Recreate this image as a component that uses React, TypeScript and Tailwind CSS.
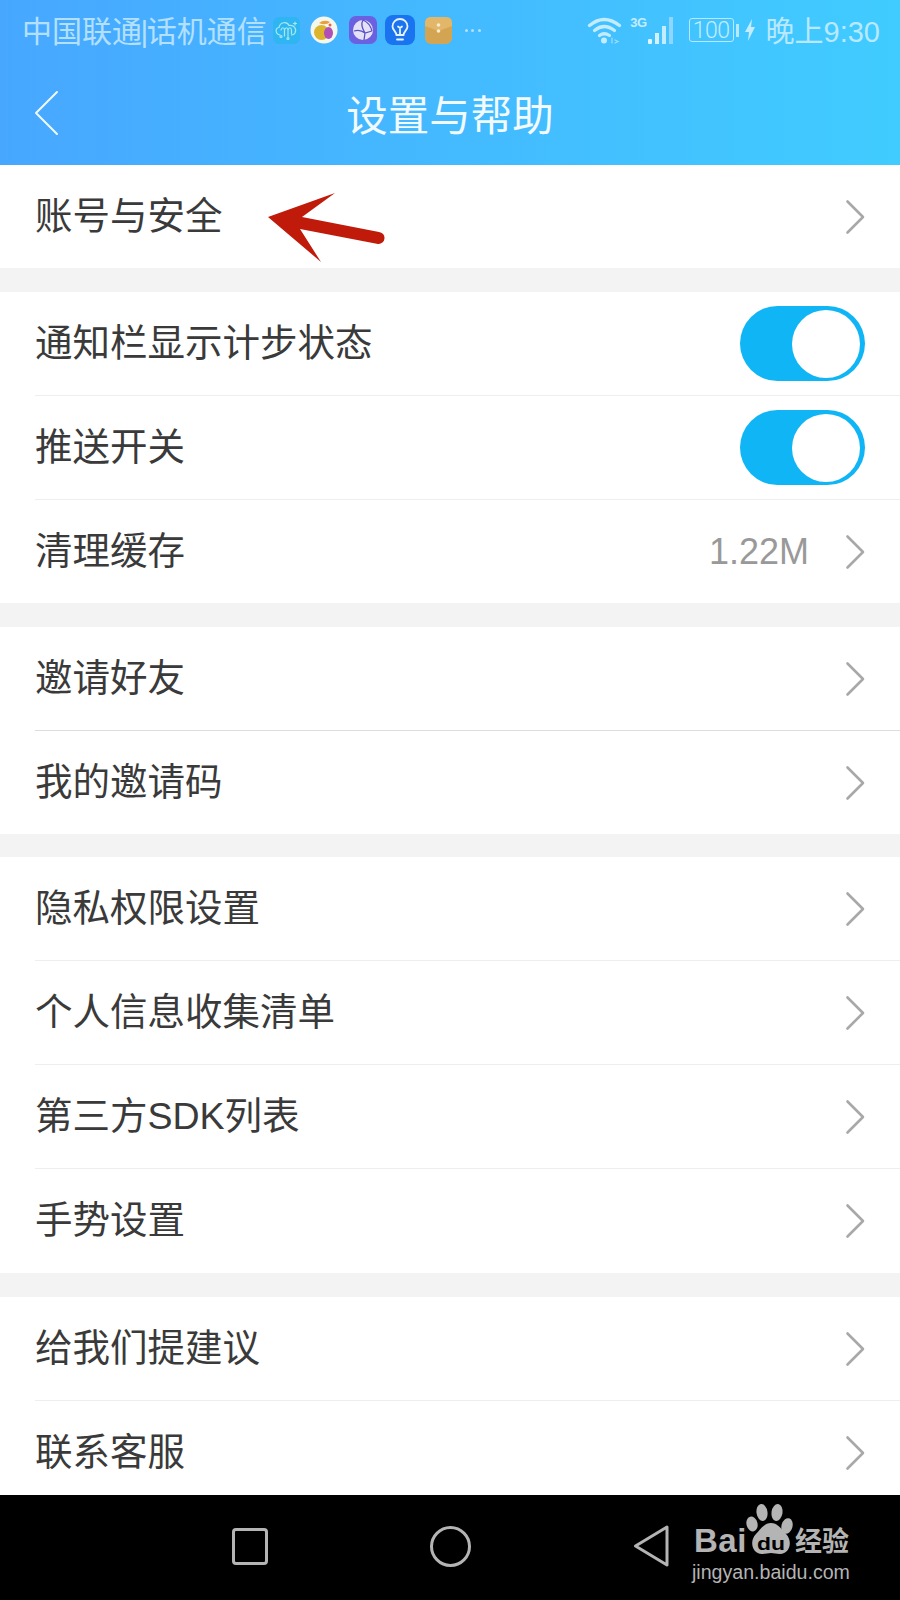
import { ReactNode } from "react"

const FONT = "font-['Liberation_Sans','Noto_Sans_CJK_SC',sans-serif]"

function Chevron() {
  return (
    <svg width="20" height="36" viewBox="0 0 20 36" className="ml-[36px]">
      <path d="M2.5 2.5 L18 18 L2.5 33.5" fill="none" stroke="#a8a8a8" strokeWidth="2.6" strokeLinecap="round" strokeLinejoin="round" />
    </svg>
  )
}

function Toggle() {
  return (
    <div className="flex h-[75px] w-[125px] items-center justify-end rounded-full bg-[#10b5f5] pr-[5px]">
      <div className="h-[68px] w-[68px] rounded-full bg-white" />
    </div>
  )
}

type RowProps = {
  label: string
  children?: ReactNode
  height?: string
  divider?: string
}

function Row({ label, children, height = "h-[104px]", divider }: RowProps) {
  return (
    <div className={`${height} shrink-0 overflow-hidden bg-white pl-[35px]`}>
      <div className={`flex h-[104px] items-center justify-between pr-[35px] ${divider ?? ""}`}>
        <span className="text-[37.5px] leading-none text-[#3a3a3a]">{label}</span>
        <div className="flex items-center">{children ?? <Chevron />}</div>
      </div>
    </div>
  )
}

function StatusIcons() {
  return (
    <div className="flex items-center">
      {/* cloud */}
      <div className="ml-[6px] flex h-[27px] w-[27px] items-center justify-center rounded-[6px] bg-[#2fb6f2]">
        <svg width="25" height="23" viewBox="0 0 25 23" fill="none" stroke="#a5e8ee" strokeWidth="1.2" strokeLinecap="round">
          <path d="M6 16 C1 15 1 9 5 8.5 C6 3 13 2 15 6.5 C20 5.5 23 10 21 14 C20 16 19 16 17.5 16" />
          <path d="M7 11 C8 8 10 8 10.5 11 V17 M10.5 11 C11.5 8 13.5 8 14 11 V18 M14 11 C15 8 17 8 17.5 11 V15" />
          <circle cx="7" cy="17.5" r="1" />
          <circle cx="14" cy="19.5" r="1" />
          <path d="M21 3 V6 M19.5 4.5 H22.5" />
        </svg>
      </div>
      {/* fruit */}
      <svg width="28" height="28" viewBox="0 0 28 28" className="ml-[10px]">
        <circle cx="14" cy="14" r="13.5" fill="#f4f7ee" />
        <circle cx="11.5" cy="16.5" r="7.5" fill="#dcb52e" />
        <ellipse cx="18.5" cy="17" rx="4.5" ry="6" fill="#b04fb8" />
        <path d="M9 7 Q14 3 20 6 Q16 10 9 7" fill="#e9a03a" />
        <circle cx="20" cy="9" r="1.5" fill="#e2653c" />
      </svg>
      {/* globe */}
      <div className="ml-[11px] flex h-[28px] w-[28px] items-center justify-center rounded-[7px] bg-[#6a60e0]">
        <svg width="22" height="22" viewBox="0 0 22 22">
          <circle cx="11" cy="11" r="10" fill="#e6e2f6" />
          <path d="M2 12 Q8 10 13 14 L20 12 M11 1 Q8 6 13 14 L12 21 M11 1 Q18 4 20 12" stroke="#5a50c8" strokeWidth="1.3" fill="none" />
        </svg>
      </div>
      {/* bulb */}
      <div className="ml-[8px] flex h-[30px] w-[30px] items-center justify-center rounded-[8px] bg-[#1a74f0]">
        <svg width="20" height="24" viewBox="0 0 20 24" fill="none" stroke="#e6f2ff" strokeWidth="1.8" strokeLinecap="round">
          <path d="M6.5 17 C6 13 2.5 12 2.5 8.5 A7.5 7.5 0 0 1 17.5 8.5 C17.5 12 14 13 13.5 17 Z" />
          <path d="M7 21.5 H13 M10 16 V10 M8 8.5 L10 10 L12 8.5" />
        </svg>
      </div>
      {/* envelope */}
      <svg width="27" height="27" viewBox="0 0 27 27" className="ml-[10px]">
        <rect width="27" height="27" rx="6" fill="#d3a552" />
        <path d="M0 6 Q0 0 6 0 H21 Q27 0 27 6 V9 L13.5 14 L0 9 Z" fill="#e3b76a" />
        <circle cx="13.5" cy="8" r="1.8" fill="#f7ecd2" />
        <circle cx="13.5" cy="14" r="1.8" fill="#f7ecd2" />
      </svg>
      <span className="ml-[13px] flex gap-[3.5px]">
        <i className="h-[3px] w-[3px] rounded-full bg-[#b3e0ff]" />
        <i className="h-[3px] w-[3px] rounded-full bg-[#b3e0ff]" />
        <i className="h-[3px] w-[3px] rounded-full bg-[#b3e0ff]" />
      </span>
    </div>
  )
}

function StatusRight() {
  return (
    <div className="flex items-center">
      <svg width="36" height="28" viewBox="0 0 36 28" fill="none" stroke="#c4ecff" strokeWidth="3.2" strokeLinecap="round">
        <path d="M2.5 9.5 Q17 -2.5 32.5 9.5" />
        <path d="M7.5 14.5 Q17 6.5 27.5 14.5" />
        <path d="M12.5 19.5 Q17 16 22.5 19.5" />
        <circle cx="17" cy="24.5" r="3" fill="#c4ecff" stroke="none" />
        <path d="M25 22 L25 27 M28 24 L31 25.5 L28 27" strokeWidth="1.2" opacity="0.7" />
      </svg>
      <div className="ml-[7px] flex h-[30px] items-start">
        <span className="text-[13px] font-bold leading-[15px] tracking-[-0.5px] text-[#c4ecff]">3G</span>
        <svg width="30" height="30" viewBox="0 0 30 30">
          <rect x="1" y="24" width="4" height="5" rx="1" fill="#e0f5ff" />
          <rect x="8" y="18" width="4" height="11" fill="#d5f1ff" />
          <rect x="15" y="11" width="4" height="18" fill="#c4ecff" />
          <rect x="22" y="2" width="4" height="27" fill="#8fd6ff" />
        </svg>
      </div>
      <div className="ml-[12px] flex h-[24px] w-[45px] items-center justify-center rounded-[3px] border-[1.5px] border-[#b9e8ff] font-['Roboto',sans-serif] text-[23px] font-light leading-none tracking-[-0.5px] text-[#c4ecff]">
        100
      </div>
      <div className="ml-[2px] h-[13px] w-[3px] bg-[#b9e8ff]" />
      <svg width="10" height="22" viewBox="0 0 10 22" className="ml-[6px]">
        <path d="M7 0 L0 13 H4 L3 22 L10 8 H6 Z" fill="#c4ecff" />
      </svg>
      <span className="ml-[11px] mt-[4px] text-[29px] leading-none text-[#b9e8ff]">晚上9:30</span>
    </div>
  )
}

function BaiduMark() {
  return (
    <div className="absolute left-[690px] top-[1502px] w-[164px] text-[#b4b4b4]">
      <div className="relative h-[54px]">
        <span className="absolute left-[4px] top-[19px] text-[33px] font-bold leading-[40px] tracking-[0.5px]">Bai</span>
        <svg width="52" height="52" viewBox="0 0 52 52" className="absolute left-[55px] top-[1px]">
          <ellipse cx="7" cy="21" rx="5.5" ry="7.5" transform="rotate(-15 7 21)" fill="#b4b4b4" />
          <ellipse cx="17" cy="9.5" rx="5.5" ry="8.5" transform="rotate(-8 17 9.5)" fill="#b4b4b4" />
          <ellipse cx="32" cy="9.5" rx="5.5" ry="8.5" transform="rotate(8 32 9.5)" fill="#b4b4b4" />
          <ellipse cx="42" cy="23" rx="5.5" ry="8" transform="rotate(15 42 23)" fill="#b4b4b4" />
          <path d="M26 20 C19 20 15 27 11 31 C4 38 7 51 17 51 C21 51 23 50 26 50 C29 50 31 51 35 51 C45 51 48 38 41 31 C37 27 33 20 26 20 Z" fill="#b4b4b4" />
          <text x="12" y="47" fontSize="18" fontWeight="700" textLength="28" lengthAdjust="spacingAndGlyphs" fontFamily="Liberation Sans" fill="#000">du</text>
        </svg>
        <span className="absolute left-[105px] top-[25px] text-[27px] font-bold leading-[30px]">经验</span>
      </div>
      <div className="ml-[2px] mt-[6px] text-[19.6px] leading-[20px]">jingyan.baidu.com</div>
    </div>
  )
}

export default function App() {
  const line = "border-b border-[#eeeeee]"

  return (
    <div className={`relative flex h-[1600px] w-[900px] flex-col overflow-hidden bg-[#f3f3f3] ${FONT}`}>
      {/* header */}
      <div className="h-[165px] shrink-0 bg-gradient-to-r from-[#47a7ff] to-[#40ccff]">
        <div className="flex h-[60px] items-center justify-between pl-[22px] pr-[20px]">
          <div className="flex items-center">
            <span className="mt-[4px] text-[30px] leading-none text-[#b3e0ff]">
              中国联通<span className="mx-[-1.5px]">|</span>话机通信
            </span>
            <StatusIcons />
          </div>
          <StatusRight />
        </div>
        <div className="relative flex h-[105px] items-center justify-center pt-[8px]">
          <svg width="26" height="46" viewBox="0 0 26 46" className="absolute left-[33px] top-[30px]">
            <path d="M24 2 L3 23 L24 44" fill="none" stroke="#eef8ff" strokeWidth="2" strokeLinecap="round" strokeLinejoin="round" />
          </svg>
          <span className="text-[41.5px] leading-none text-[#f2faff]">设置与帮助</span>
        </div>
      </div>

      <Row label="账号与安全" height="h-[103px]" />

      <div className="mt-[24px] flex flex-col">
        <Row label="通知栏显示计步状态" divider={line}><Toggle /></Row>
        <Row label="推送开关" divider={line}><Toggle /></Row>
        <Row label="清理缓存" height="h-[103px]">
          <span className="text-[36px] leading-none text-[#999999]">1.22M</span>
          <Chevron />
        </Row>
      </div>

      <div className="mt-[24px] flex flex-col">
        <Row label="邀请好友" divider="border-b border-[#dddddd]" />
        <Row label="我的邀请码" height="h-[103px]" />
      </div>

      <div className="mt-[23px] flex flex-col">
        <Row label="隐私权限设置" divider={line} />
        <Row label="个人信息收集清单" divider={line} />
        <Row label="第三方SDK列表" divider={line} />
        <Row label="手势设置" />
      </div>

      <div className="mt-[24px] flex flex-col">
        <Row label="给我们提建议" divider={line} />
        <Row label="联系客服" height="h-[94px]" />
      </div>

      {/* android nav bar */}
      <div className="flex h-[105px] shrink-0 items-center bg-black pb-[3px]">
        <div className="ml-[232px] h-[37px] w-[36px] rounded-[4px] border-[3px] border-[#b4b4b4]" />
        <div className="ml-[162px] h-[41px] w-[41px] rounded-full border-[3px] border-[#b4b4b4]" />
        <svg width="36" height="42" viewBox="0 0 36 42" className="ml-[162px]">
          <path d="M34 2 L2.5 21 L34 40 Z" fill="none" stroke="#b4b4b4" strokeWidth="3" strokeLinejoin="round" />
        </svg>
      </div>

      {/* red annotation arrow */}
      <svg width="122" height="76" viewBox="0 0 122 76" className="absolute left-[266px] top-[191px]">
        <path d="M2 26 L69 2 L36 26 L113 41 A6 6 0 0 1 112 53 L34 38 L55 71 Z" fill="#bf1a0a" />
      </svg>

      <BaiduMark />
    </div>
  )
}
